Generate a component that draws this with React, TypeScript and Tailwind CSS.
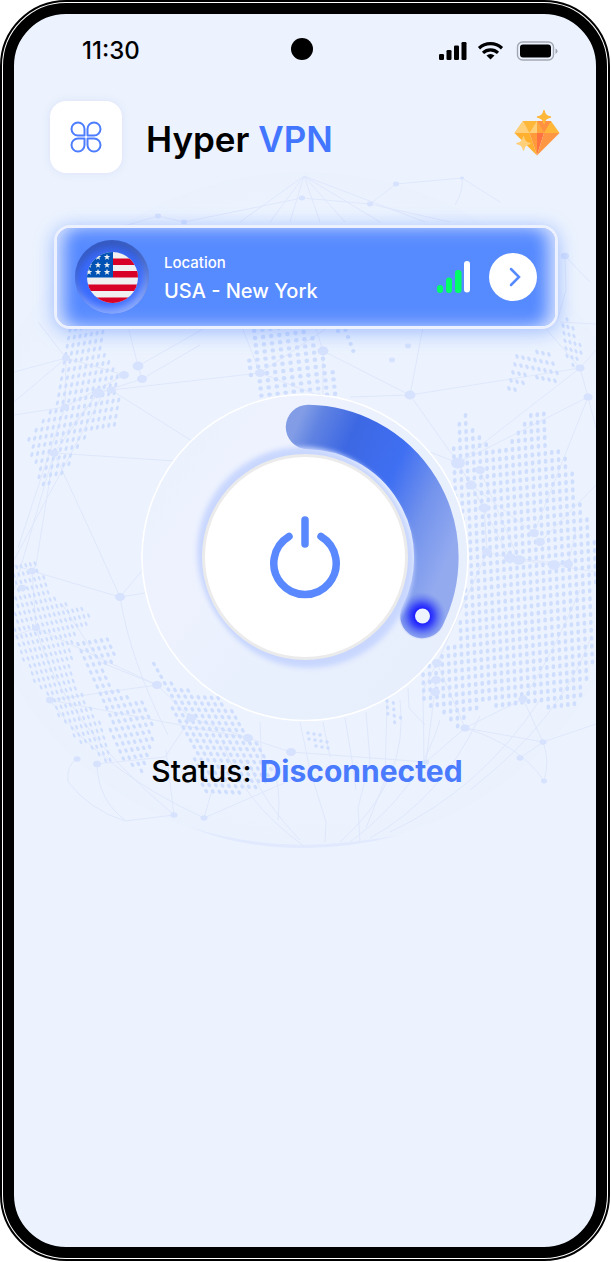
import { useState } from "react";

type Point = [number, number];

type Patch = {
  outline: Point[];
  origin: Point;
  col: Point;
  row: Point;
  rx: number;
  ry: number;
  tilt: number;
};

const patches: Patch[] = [
  {
    outline: [[68, 322], [104, 322], [103, 345], [117, 373], [123, 410], [115, 428], [88, 437], [78, 450], [64, 478], [40, 488], [28, 440], [52, 405], [62, 375], [64, 350]],
    origin: [70, 330],
    col: [5.7, -1],
    row: [-1.4, 8.1],
    rx: 1.5,
    ry: 2.5,
    tilt: 18,
  },
  {
    outline: [[252, 322], [306, 322], [318, 345], [330, 358], [338, 394], [256, 402], [248, 362]],
    origin: [255, 338],
    col: [8.1, -1],
    row: [0.8, 7.2],
    rx: 2.3,
    ry: 2.2,
    tilt: 0,
  },
  {
    outline: [[336, 328], [350, 328], [361, 356], [350, 354]],
    origin: [338, 331],
    col: [7.5, -1],
    row: [2.6, 7],
    rx: 2.2,
    ry: 2.1,
    tilt: 0,
  },
  {
    outline: [[14, 566], [36, 562], [55, 598], [94, 612], [84, 628], [72, 640], [74, 680], [90, 704], [106, 730], [112, 766], [76, 740], [50, 705], [28, 672], [14, 640]],
    origin: [12, 568],
    col: [4.6, -0.9],
    row: [2.1, 7.4],
    rx: 1.2,
    ry: 2.4,
    tilt: -24,
  },
  {
    outline: [[76, 640], [106, 634], [118, 655], [104, 672], [116, 690], [148, 704], [157, 740], [140, 774], [118, 760], [104, 706], [90, 676]],
    origin: [78, 644],
    col: [5.9, -0.9],
    row: [3.2, 7.1],
    rx: 1.6,
    ry: 2.4,
    tilt: -30,
  },
  {
    outline: [[152, 660], [176, 686], [220, 698], [234, 712], [256, 742], [274, 770], [262, 786], [238, 796], [205, 794], [192, 752], [176, 718]],
    origin: [154, 664],
    col: [6.6, 0.3],
    row: [3.6, 6.4],
    rx: 1.7,
    ry: 2.4,
    tilt: -36,
  },
  {
    outline: [[466, 410], [478, 436], [500, 450], [514, 432], [532, 410], [546, 414], [552, 448], [570, 458], [576, 490], [588, 520], [596, 540], [596, 650], [580, 704], [550, 708], [480, 706], [455, 730], [440, 714], [424, 700], [418, 674], [456, 640], [469, 560], [450, 480], [455, 430]],
    origin: [446, 418],
    col: [6.5, -0.8],
    row: [0.3, 7.9],
    rx: 1.9,
    ry: 2.5,
    tilt: 6,
  },
  {
    outline: [[514, 350], [528, 352], [544, 346], [560, 372], [552, 390], [532, 374], [516, 398], [504, 394]],
    origin: [505, 354],
    col: [6, 1.2],
    row: [-2, 8],
    rx: 1.6,
    ry: 2.5,
    tilt: -28,
  },
  {
    outline: [[562, 316], [576, 324], [582, 352], [574, 366], [564, 356]],
    origin: [562, 318],
    col: [5, 1.4],
    row: [1, 7.6],
    rx: 1.4,
    ry: 2.4,
    tilt: -24,
  },
  {
    outline: [[306, 732], [326, 736], [332, 748], [312, 750]],
    origin: [308, 733],
    col: [6, 1],
    row: [1, 6],
    rx: 1.7,
    ry: 1.7,
    tilt: 0,
  },
  {
    outline: [[384, 698], [394, 702], [404, 722], [396, 726], [384, 712]],
    origin: [387, 701],
    col: [6.4, 2],
    row: [0.4, 6.4],
    rx: 1.6,
    ry: 2,
    tilt: -10,
  },
];

const nodes: [number, number, number][] = [
  [66, 358, 4],
  [65, 407, 4],
  [54, 453, 4.5],
  [98, 393, 6],
  [111, 390, 4.5],
  [124, 375, 5],
  [138, 366, 5.5],
  [142, 379, 5],
  [120, 597, 5],
  [32, 571, 4],
  [22, 588, 4],
  [36, 628, 4],
  [50, 700, 4],
  [157, 685, 5],
  [191, 718, 5],
  [248, 738, 5],
  [291, 752, 5],
  [174, 815, 3.5],
  [204, 818, 3.5],
  [77, 759, 3.5],
  [97, 764, 4],
  [260, 373, 5],
  [410, 395, 5.5],
  [392, 360, 3],
  [408, 346, 3],
  [458, 463, 7],
  [471, 485, 5.5],
  [480, 470, 5],
  [484, 508, 5.5],
  [487, 552, 5],
  [510, 558, 6],
  [519, 560, 6],
  [534, 533, 5],
  [540, 542, 5],
  [554, 565, 6],
  [568, 564, 5],
  [580, 368, 4.5],
  [588, 397, 4.5],
  [437, 663, 5],
  [436, 680, 5],
  [435, 692, 5],
  [465, 728, 4.5],
  [523, 699, 4.5],
  [543, 742, 3.5],
  [520, 758, 3.5],
  [544, 781, 3],
  [426, 762, 3],
  [323, 351, 5.5],
  [302, 198, 3],
  [396, 184, 3],
  [370, 204, 3],
  [462, 178, 2],
  [158, 216, 3],
  [184, 222, 3],
  [565, 256, 4],
];

const links = [
  "M14 372L66 358L14 402M66 358L38 322M66 358L65 407L14 415M65 407L124 375L66 358",
  "M98 393L54 453L14 590M98 393L142 379L138 366L128 326M138 366L205 328M142 379L200 345",
  "M111 390L260 373L330 326M111 390L195 443M54 453L175 461M54 453Q90 530 120 597L145 567M120 597L145 593",
  "M54 453L36 565L32 571L120 597Q130 660 168 735M14 565L32 571L36 628L14 636M36 628L157 685L191 718L248 738L291 752L426 762",
  "M105 390L14 560M65 407Q40 480 18 548M98 393L60 440M62 604L100 662L157 685M50 700L157 685M50 700L248 738M191 718L165 757L97 764Q98 800 125 820",
  "M77 759Q66 765 68 782Q90 810 125 821L174 815M174 815L166 750M204 818L212 790M204 818L291 780M50 700Q100 770 204 818M36 628Q60 720 174 815",
  "M410 395L323 351L314 322M323 351L323 396M410 395L580 368L588 397L458 463L580 368M410 395L458 463L430 452M410 395L424 322M410 395L350 397M260 373L320 396M260 373L240 322",
  "M458 463L484 508L487 552L510 558L568 564M471 485L534 533L540 542M480 470L519 560L554 565L596 572M471 485L510 558M484 508L487 552L437 663",
  "M588 397L534 533M588 397L596 428M580 368L596 350M580 368L540 322M540 542L596 485M554 565L568 564L576 530M465 728L523 699L543 742L596 724",
  "M465 728L543 742L520 758M465 728Q520 745 544 781Q550 760 543 742M465 728L426 762L436 680M523 699Q550 660 580 590M437 663L465 728M437 663L423 690L424 760",
  "M560 322L596 324M565 256L566 290L558 318M565 256L590 282M462 178Q464 190 455 205M370 204L396 184L462 178L500 202M302 198L370 204L450 222M184 222L158 216L60 245M184 222L302 198",
  "M304 176L240 222M304 176L270 222M304 176L290 222M304 176L320 222M304 176L345 222M304 176L380 222M304 176L425 222",
  "M323 722L330 757M345 718L352 760L356 790M366 712L370 760L358 808L360 842M408 688L409 708L425 725M260 722L262 770M387 702L385 780L366 828M300 722L310 770L326 822L325 842",
  "M270 760Q282 785 278 820M252 770Q262 800 300 840M222 740Q240 800 304 846M400 700Q410 780 340 842M440 720Q420 790 350 842M480 716Q440 800 370 838M540 700Q480 790 390 832M590 640Q560 720 470 790",
];

function inside([x, y]: Point, outline: Point[]) {
  let hit = false;
  for (let i = 0, j = outline.length - 1; i < outline.length; j = i++) {
    const [xi, yi] = outline[i];
    const [xj, yj] = outline[j];
    if (yi > y !== yj > y && x < ((xj - xi) * (y - yi)) / (yj - yi) + xi) {
      hit = !hit;
    }
  }
  return hit;
}

function dotsOf(patch: Patch) {
  const dots: Point[] = [];
  for (let r = -4; r < 50; r++) {
    for (let c = -40; c < 50; c++) {
      const p: Point = [
        patch.origin[0] + c * patch.col[0] + r * patch.row[0],
        patch.origin[1] + c * patch.col[1] + r * patch.row[1],
      ];
      if (inside(p, patch.outline)) dots.push(p);
    }
  }
  return dots;
}

function Globe() {
  return (
    <svg
      viewBox="14 165 582 690"
      className="pointer-events-none absolute inset-x-0 top-[151px] w-full"
      aria-hidden="true"
    >
      <defs>
        <radialGradient id="globe" cx="304" cy="510" r="338" gradientUnits="userSpaceOnUse">
          <stop offset="0.9" stopColor="#dfe8ff" stopOpacity="0" />
          <stop offset="1" stopColor="#dfe8ff" stopOpacity="0.12" />
        </radialGradient>
      </defs>
      <circle cx="304" cy="510" r="338" fill="url(#globe)" />
      <path d="M190 827Q240 848 304 848Q350 848 400 835Q350 844 304 845Q240 844 190 827Z" fill="#dbe5fe" opacity="0.7" />
      <g fill="none" stroke="#dfe7fc" strokeWidth="1">
        {links.map((d) => (
          <path key={d} d={d} />
        ))}
      </g>
      {patches.map((patch, i) => (
        <g key={i} fill="#cfdefe">
          {dotsOf(patch).map(([x, y]) => (
            <ellipse
              key={`${x} ${y}`}
              cx={x}
              cy={y}
              rx={patch.rx}
              ry={patch.ry}
              transform={`rotate(${patch.tilt} ${x} ${y})`}
            />
          ))}
        </g>
      ))}
      <g fill="#d6e2fe">
        {nodes.map(([x, y, r]) => (
          <ellipse key={`${x} ${y}`} cx={x} cy={y} rx={r} ry={r * 0.8} />
        ))}
      </g>
    </svg>
  );
}

function StatusBar() {
  return (
    <div className="grid grid-cols-[1fr_auto_1fr] items-center pt-[23px] pr-[38px] pl-8 text-black">
      <span className="pl-9 text-[24px] leading-7 font-medium">11:30</span>
      <span className="mb-1 size-[22px] rounded-full bg-black" />
      <svg viewBox="0 0 119 20" className="h-5 w-[119px] justify-self-end" aria-hidden="true">
        <rect x="0" y="13" width="5" height="6" rx="1.3" />
        <rect x="7.5" y="9" width="5" height="10" rx="1.3" />
        <rect x="15" y="4.5" width="5" height="14.5" rx="1.3" />
        <rect x="22.5" y="1" width="5" height="18" rx="1.3" />
        <g fill="none" stroke="#000" strokeWidth="3.2">
          <path d="M40 7.2A17 17 0 0 1 63 7.2" />
          <path d="M44 11.8A11 11 0 0 1 59 11.8" />
        </g>
        <path d="M47.5 14.6A6 6 0 0 1 55.5 14.6L51.5 18.6Z" />
        <rect x="78.5" y="1" width="36" height="18" rx="5" fill="none" stroke="#a4a8b2" strokeWidth="1.4" />
        <rect x="81" y="3.5" width="31" height="13" rx="3" />
        <path d="M116.5 7.5Q118.5 8.3 118.5 10.2Q118.5 12 116.5 13Z" fill="#a4a8b2" />
      </svg>
    </div>
  );
}

function MenuIcon() {
  return (
    <svg viewBox="0 0 32 32" className="size-8" fill="none" stroke="#4d7dff" strokeWidth="2" strokeLinejoin="round" aria-hidden="true">
      <path d="M14.5 14.5H8A6.5 6.5 0 1 1 14.5 8Z" />
      <path d="M17.5 14.5V8A6.5 6.5 0 1 1 24 14.5Z" />
      <path d="M14.5 17.5V24A6.5 6.5 0 1 1 8 17.5Z" />
      <path d="M17.5 17.5H24A6.5 6.5 0 1 1 17.5 24Z" />
    </svg>
  );
}

function PremiumIcon() {
  return (
    <svg viewBox="0 0 46 46" className="size-[46px]" aria-hidden="true">
      <path d="M9 11H37L45.5 23H0.5Z" fill="#ffb739" />
      <path d="M9 11L15.5 23H0.5Z" fill="#ffcf7a" />
      <path d="M23 11L29.5 23H15.5Z" fill="#ffcf7a" />
      <path d="M23 11H37L30 23Z" fill="#ff9140" />
      <path d="M23 11V23H30Z" fill="#ffa63c" />
      <path d="M0.5 23H15.5L23 45.5Z" fill="#ffb02e" />
      <path d="M15.5 23H23V45.5Z" fill="#ff9a3a" />
      <path d="M23 23H30L23 45.5Z" fill="#ff7340" />
      <path d="M30 23H45.5L23 45.5Z" fill="#ff9643" />
      <path d="M30 0.5Q30.8 6.2 36.5 7Q30.8 7.8 30 13.5Q29.200 7.8 23.5 7Q29.200 6.2 30 0.5Z" fill="#ffb739" stroke="#ffb739" strokeWidth="1.4" strokeLinejoin="round" />
      <path d="M9.5 27Q10.300 32.700 16 33.5Q10.300 34.300 9.5 40Q8.700 34.300 3 33.5Q8.700 32.700 9.5 27Z" fill="#ffcf7a" stroke="#ffcf7a" strokeWidth="1.4" strokeLinejoin="round" />
    </svg>
  );
}

const stars: Point[] = [
  [3, 5], [12, 5], [21, 5],
  [3, 13], [12, 13], [21, 13],
  [3, 20], [12, 20], [21, 20],
];

function Flag() {
  return (
    <svg viewBox="0 0 51 51" className="size-[51px]" role="img" aria-label="United States">
      <clipPath id="flag">
        <circle cx="25.5" cy="25.5" r="25.5" />
      </clipPath>
      <g clipPath="url(#flag)">
        <rect width="51" height="51" fill="#f0f0f0" />
        <path d="M26 6.5h25v6.500h-25zM26 19h25v6.500h-25zM0 32.500h51v6.500h-51zM0 45.500h51v6h-51z" fill="#d80027" />
        <rect width="26" height="25.5" fill="#0052b4" />
        {stars.map(([x, y]) => (
          <path
            key={`${x} ${y}`}
            transform={`translate(${x - 1} ${y})`}
            d="M0 -3.2L0.8 -1H3.2L1.3 0.5L2 2.8L0 1.4L-2 2.8L-1.3 0.5L-3.2 -1H-0.8Z"
            fill="#f0f0f0"
          />
        ))}
      </g>
    </svg>
  );
}

function LocationCard() {
  return (
    <section className="mr-[38px] ml-10 mt-[52px] flex items-center rounded-[16px] border-3 border-[#ecf1fd] bg-[#568aff] py-3 pr-[18px] pl-[18px] shadow-[0_4px_20px_rgba(86,138,255,0.4),0_0_16px_rgba(86,138,255,0.15),inset_0_0_20px_rgba(255,255,255,0.45),inset_16px_0_18px_-10px_rgba(236,241,253,0.7),inset_-16px_0_18px_-10px_rgba(236,241,253,0.7)]">
      <div className="flex size-[74px] items-center justify-center rounded-full bg-[#3a6bff] shadow-[inset_0_8px_10px_rgba(50,80,160,0.7),inset_-3px_-5px_8px_rgba(170,195,255,0.8)]">
        <Flag />
      </div>
      <div className="ml-[15px] flex-1 pt-1 text-white">
        <p className="text-[15px] leading-5 font-medium">Location</p>
        <p className="mt-1 text-[20px] leading-7 font-medium">USA - New York</p>
      </div>
      <svg viewBox="0 0 34 32" className="h-8 w-[34px]" aria-hidden="true">
        <rect x="0" y="24" width="6" height="8" rx="3" fill="#00ff66" />
        <rect x="9" y="16.5" width="6" height="15.5" rx="3" fill="#00ff66" />
        <rect x="18" y="9" width="6.5" height="23" rx="3" fill="#00ff66" />
        <rect x="27" y="0" width="6" height="31.5" rx="3" fill="#fff" />
      </svg>
      <button
        type="button"
        aria-label="Change location"
        className="ml-[18px] flex size-12 items-center justify-center rounded-full bg-white"
      >
        <svg viewBox="0 0 12 20" className="ml-1 h-5 w-3" fill="none" stroke="#568aff" strokeWidth="2.5" strokeLinecap="round" aria-hidden="true">
          <path d="M2 2L10 10L2 18" />
        </svg>
      </button>
    </section>
  );
}

function Dial({ onToggle }: { onToggle: () => void }) {
  return (
    <div className="relative mt-16 grid place-items-center">
      <svg viewBox="142 393 328 328" className="col-start-1 row-start-1 size-[328px]" aria-hidden="true">
        <defs>
          <linearGradient id="plate" x1="142" y1="450" x2="470" y2="690" gradientUnits="userSpaceOnUse">
            <stop offset="0" stopColor="#e9f2fe" />
            <stop offset="0.25" stopColor="#eef2fe" />
            <stop offset="0.6" stopColor="#e8f0fd" />
            <stop offset="1" stopColor="#e7edfc" />
          </linearGradient>
          <linearGradient id="arc" x1="286" y1="452" x2="462" y2="530" gradientUnits="userSpaceOnUse">
            <stop offset="0" stopColor="#829de6" />
            <stop offset="0.1" stopColor="#5f82e2" />
            <stop offset="0.28" stopColor="#3d68e3" />
            <stop offset="0.56" stopColor="#3f6ff2" />
            <stop offset="0.78" stopColor="#7393ec" />
            <stop offset="1" stopColor="#93aaef" />
          </linearGradient>
          <radialGradient id="glow" cx="423" cy="616" r="24" gradientUnits="userSpaceOnUse">
            <stop offset="0.3" stopColor="#1c1cff" />
            <stop offset="0.5" stopColor="#2c36fa" stopOpacity="0.85" />
            <stop offset="1" stopColor="#5b74ee" stopOpacity="0" />
          </radialGradient>
        </defs>
        <circle cx="306" cy="557.5" r="163" fill="url(#plate)" stroke="#fff" strokeWidth="1.6" />
        <path d="M309 427A130.500 130.500 0 0 1 423.500 616" fill="none" stroke="url(#arc)" strokeWidth="44.5" strokeLinecap="round" />
        <circle cx="423.500" cy="616" r="24" fill="url(#glow)" />
        <circle cx="423.500" cy="616" r="7.5" fill="#eef4ff" />
      </svg>
      <button
        type="button"
        aria-label="Toggle connection"
        onClick={onToggle}
        className="col-start-1 row-start-1 flex size-[206px] items-center justify-center rounded-full border-3 border-[#ebebeb] bg-white shadow-[-3px_-5px_5px_2px_#c9d7ff,4px_6px_5px_2px_#c9d7ff]"
      >
        <svg viewBox="0 0 72 84" className="h-[84px] w-[72px]" fill="none" stroke="#5a89ff" strokeWidth="7.5" strokeLinecap="round" aria-hidden="true">
          <path d="M36 5V29" />
          <path d="M20 21.5A31.2 31.2 0 1 0 52 21.5" />
        </svg>
      </button>
    </div>
  );
}

export default function App() {
  const [connected, setConnected] = useState(false);

  return (
    <div className="flex min-h-screen bg-white pr-px pb-px font-['Inter',sans-serif]">
      <div className="flex flex-1 rounded-[66px] border-2 border-black bg-white p-px">
        <main className="relative flex-1 overflow-hidden rounded-[63px] border-11 border-black bg-[#ecf3fe]">
          <Globe />
          <StatusBar />
          <header className="relative flex items-center px-9 pt-9">
            <button
              type="button"
              aria-label="Menu"
              className="flex size-[72px] items-center justify-center rounded-2xl bg-white shadow-[0_0_8px_rgba(120,120,200,0.15)]"
            >
              <MenuIcon />
            </button>
            <h1 className="ml-6 flex-1 pt-1 text-[35px] leading-11 font-semibold text-black">
              Hyper <span className="text-[#4376ff]">VPN</span>
            </h1>
            <a href="#premium" aria-label="Premium" className="mb-2">
              <PremiumIcon />
            </a>
          </header>
          <div className="relative">
            <LocationCard />
            <Dial onToggle={() => setConnected(!connected)} />
            <p className="mt-[30px] pl-1 text-center text-[30px] leading-10 font-medium text-black">
              Status:{" "}
              <span className="font-bold text-[#4a7bff]">
                {connected ? "Connected" : "Disconnected"}
              </span>
            </p>
          </div>
        </main>
      </div>
    </div>
  );
}
